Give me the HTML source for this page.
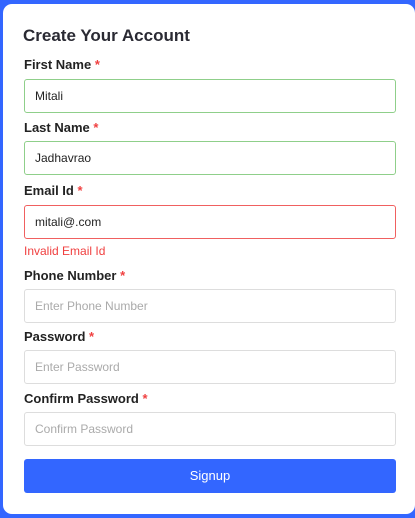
<!DOCTYPE html>
<html><head><style>
*{box-sizing:border-box;margin:0;padding:0}
body{width:415px;height:518px;background:#3366ff;font-family:"Liberation Sans",sans-serif;position:relative;overflow:hidden}
.card{position:absolute;left:3px;top:4px;width:412px;height:510px;background:#fff;border-radius:9px}
.a{position:absolute;left:24px}
h1{position:absolute;left:23px;top:26px;font-size:17px;font-weight:bold;color:#2a2a33}
.l{font-size:13px;font-weight:bold;color:#222;}
.l span{color:#f04040}
.i{width:372px;height:34px;border:1px solid #ddd;border-radius:3px;font-size:12px;padding-left:10px;line-height:32px;color:#aaa}
.g{border-color:#8fcf8a;color:#222}
.r{border-color:#f06060;color:#222}
.b{width:372px;height:34px;background:#3366ff;border-radius:3px;color:#fff;text-align:center;line-height:34px;font-size:13px}
</style></head><body>
<div class="card"></div>
<h1>Create Your Account</h1>
<div class="a l" style="top:57px">First Name <span>*</span></div>
<div class="a i g" style="top:79px">Mitali</div>
<div class="a l" style="top:120px">Last Name <span>*</span></div>
<div class="a i g" style="top:141px">Jadhavrao</div>
<div class="a l" style="top:183px">Email Id <span>*</span></div>
<div class="a i r" style="top:205px">mitali@.com</div>
<div class="a" style="top:244px;font-size:12px;color:#f04040">Invalid Email Id</div>
<div class="a l" style="top:268px">Phone Number <span>*</span></div>
<div class="a i" style="top:289px">Enter Phone Number</div>
<div class="a l" style="top:329px">Password <span>*</span></div>
<div class="a i" style="top:350px">Enter Password</div>
<div class="a l" style="top:391px">Confirm Password <span>*</span></div>
<div class="a i" style="top:412px">Confirm Password</div>
<div class="a b" style="top:459px">Signup</div>
</body></html>
